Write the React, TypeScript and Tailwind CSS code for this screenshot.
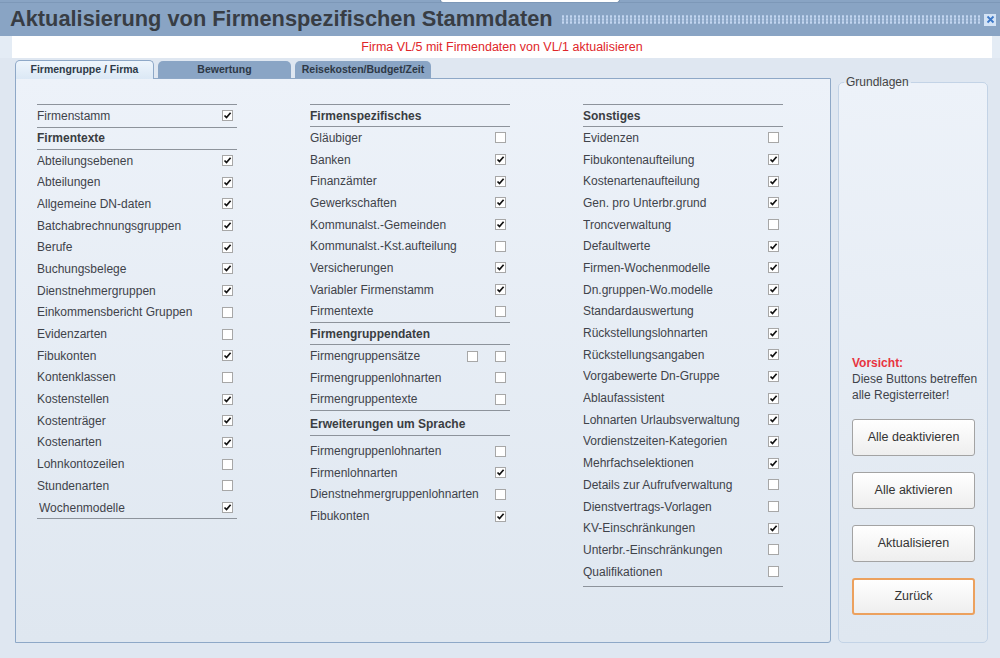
import React from 'react';

type Entry =
	| { t: 'line'; cls?: string }
	| { t: 'head'; label: string; cls?: string }
	| { t: 'item'; label: string; on: boolean; extra?: boolean; cls?: string; boxCls?: string };

const line = (cls?: string): Entry => ({ t: 'line', cls });
const head = (label: string, cls?: string): Entry => ({ t: 'head', label, cls });
const item = (label: string, on: boolean, opts: Partial<{ extra: boolean; cls: string; boxCls: string }> = {}): Entry => ({
	t: 'item',
	label,
	on,
	...opts,
});

const col1: Entry[] = [
	line(),
	item('Firmenstamm', true),
	line(),
	head('Firmentexte'),
	line(),
	item('Abteilungsebenen', true),
	item('Abteilungen', true),
	item('Allgemeine DN-daten', true),
	item('Batchabrechnungsgruppen', true),
	item('Berufe', true),
	item('Buchungsbelege', true),
	item('Dienstnehmergruppen', true),
	item('Einkommensbericht Gruppen', false),
	item('Evidenzarten', false),
	item('Fibukonten', true),
	item('Kontenklassen', false),
	item('Kostenstellen', true),
	item('Kostenträger', true),
	item('Kostenarten', true),
	item('Lohnkontozeilen', false),
	item('Stundenarten', false),
	item('Wochenmodelle', true, { cls: 'pl-[2px]' }),
	line(),
];

const col2: Entry[] = [
	line(),
	head('Firmenspezifisches'),
	line(),
	item('Gläubiger', false),
	item('Banken', true),
	item('Finanzämter', true),
	item('Gewerkschaften', true),
	item('Kommunalst.-Gemeinden', true),
	item('Kommunalst.-Kst.aufteilung', false),
	item('Versicherungen', true),
	item('Variabler Firmenstamm', true),
	item('Firmentexte', false),
	line(),
	head('Firmengruppendaten'),
	line(),
	item('Firmengruppensätze', false, { extra: true }),
	item('Firmengruppenlohnarten', false),
	item('Firmengruppentexte', false),
	line(),
	head('Erweiterungen um Sprache', 'h-[24px] pt-[1px]'),
	line('mb-[4px]'),
	item('Firmengruppenlohnarten', false),
	item('Firmenlohnarten', true),
	item('Dienstnehmergruppenlohnarten', false, { boxCls: 'mr-[2px]' }),
	item('Fibukonten', true, { boxCls: 'mr-[2px]' }),
];

const col3: Entry[] = [
	line(),
	head('Sonstiges'),
	line(),
	item('Evidenzen', false),
	item('Fibukontenaufteilung', true),
	item('Kostenartenaufteilung', true),
	item('Gen. pro Unterbr.grund', true),
	item('Troncverwaltung', false),
	item('Defaultwerte', true),
	item('Firmen-Wochenmodelle', true),
	item('Dn.gruppen-Wo.modelle', true),
	item('Standardauswertung', true),
	item('Rückstellungslohnarten', true),
	item('Rückstellungsangaben', true),
	item('Vorgabewerte Dn-Gruppe', true),
	item('Ablaufassistent', true),
	item('Lohnarten Urlaubsverwaltung', true),
	item('Vordienstzeiten-Kategorien', true),
	item('Mehrfachselektionen', true),
	item('Details zur Aufrufverwaltung', false),
	item('Dienstvertrags-Vorlagen', false),
	item('KV-Einschränkungen', true),
	item('Unterbr.-Einschränkungen', false),
	item('Qualifikationen', false),
	line('mt-[4px]'),
];

function Box({ on, className = '' }: { on: boolean; className?: string }) {
	return (
		<span className={`flex h-[11px] w-[11px] shrink-0 items-center justify-center border border-[#a7a7a7] bg-white ${className}`}>
			{on && (
				<svg width="9" height="9" viewBox="0 0 9 9">
					<path d="M1.5 4.5 L3.5 6.6 L7.6 1.8" fill="none" stroke="#111" strokeWidth="1.7" />
				</svg>
			)}
		</span>
	);
}

function Column({ entries }: { entries: Entry[] }) {
	return (
		<div className="flex w-[200px] flex-col">
			{entries.map((e, i) => {
				if (e.t === 'line') return <div key={i} className={`h-px shrink-0 bg-[#8d939b] ${e.cls ?? ''}`} />;
				if (e.t === 'head')
					return (
						<div key={i} className={`flex h-[21px] shrink-0 items-center text-[12px] font-bold text-[#3a3d42] ${e.cls ?? ''}`}>
							{e.label}
						</div>
					);
				return (
					<div key={i} className={`flex h-[21.7px] shrink-0 items-center text-[12px] text-[#3f434a] ${e.cls ?? ''}`}>
						<span className="flex-1 truncate">{e.label}</span>
						{e.extra && <Box on={false} className="mr-[17px]" />}
						<Box on={e.on} className={`mr-[4px] ${e.boxCls ?? ''}`} />
					</div>
				);
			})}
		</div>
	);
}

function Btn({ label, primary }: { label: string; primary?: boolean }) {
	return (
		<button
			className={`h-[37px] w-[123px] rounded-[3px] bg-gradient-to-b from-white to-[#eeeeee] text-[12.5px] text-[#333] ${
				primary ? 'border-2 border-[#eca15e]' : 'border border-[#a3a3a3]'
			}`}
		>
			{label}
		</button>
	);
}

export default function App() {
	return (
		<div className="flex h-[658px] w-[1000px] flex-col overflow-hidden bg-[#dfe7f1] font-['Liberation_Sans',Arial,sans-serif]">
			{/* title bar */}
			<div className="relative flex h-[36px] shrink-0 items-center bg-[#89a4c4]">
				<div className="absolute left-[440px] top-0 h-[3px] w-[180px] rounded-b-[3px] border-x border-b border-[#7590b0] bg-white" />
				<div className="absolute left-0 top-0 h-[3px] w-full border-b border-[#7d98b8]" />
				<h1 className="shrink-0 whitespace-nowrap pl-[10px] pt-[3px] text-[21.8px] font-bold text-[#383d44]">
					Aktualisierung von Firmenspezifischen Stammdaten
				</h1>
				<div className="ml-[8px] mt-[3px] h-[9px] min-w-0 flex-1 bg-[radial-gradient(circle,#c3d6f0_1px,transparent_1.4px)] bg-[length:4px_3px]" />
				<div className="ml-[4px] mr-[4px] mt-[3px] flex h-[12px] w-[12px] shrink-0 items-center justify-center bg-[#d4e3f5]">
					<svg width="9" height="9" viewBox="0 0 9 9">
						<path d="M1.5 1.5 L7.5 7.5 M7.5 1.5 L1.5 7.5" stroke="#3c78c8" strokeWidth="1.8" />
					</svg>
				</div>
			</div>

			{/* subtitle */}
			<div className="flex h-[22px] shrink-0 bg-[#e4ecf5] pl-[12px] pr-[8px]">
				<div className="flex flex-1 items-center justify-center bg-white text-[12.5px] text-[#e0262a]">
					Firma VL/5 mit Firmendaten von VL/1 aktualisieren
				</div>
			</div>

			{/* body */}
			<div className="flex flex-1 gap-[7px] pl-[15px] pr-[12px] pt-[2px] pb-[15px]">
				<div className="flex w-[816px] shrink-0 flex-col">
					<div className="flex h-[18px] shrink-0 items-end gap-[4px]">
						<div className="relative z-10 -mb-px flex h-[19px] w-[139px] items-center justify-center rounded-t-[5px] border border-b-0 border-[#8ea8c7] bg-gradient-to-b from-[#eef5fc] to-[#dbe8f5] text-[10.5px] font-bold text-[#2e3a47]">
							Firmengruppe / Firma
						</div>
						<div className="flex h-[17px] w-[133px] items-center justify-center rounded-t-[5px] bg-[#8aa5c5] text-[10.5px] font-bold text-[#2d3845]">
							Bewertung
						</div>
						<div className="flex h-[17px] w-[136px] items-center justify-center rounded-t-[5px] bg-[#8aa5c5] text-[10.5px] font-bold text-[#2d3845]">
							Reisekosten/Budget/Zeit
						</div>
					</div>
					<div className="flex flex-1 gap-[73px] rounded-br-[3px] border border-[#8ea8c7] bg-gradient-to-b from-[#edf2f9] to-[#dfe7f0] pl-[21px] pt-[25px]">
						<Column entries={col1} />
						<Column entries={col2} />
						<Column entries={col3} />
					</div>
				</div>

				<fieldset className="mt-[13px] flex w-[150px] min-w-0 flex-col rounded-[5px] border border-[#c3d3e6] bg-gradient-to-b from-[#edf2f9] to-[#dfe7f0] pl-[13px] pr-[10px] pb-[27px]">
					<legend className="-ml-[8px] px-[2px] text-[12px] text-[#444]">Grundlagen</legend>
					<div className="flex-1" />
					<div className="whitespace-nowrap text-[12px] leading-[16px] text-[#3f434a]">
						<div className="font-bold text-[#e8343f]">Vorsicht:</div>
						<div>Diese Buttons betreffen</div>
						<div>alle Registerreiter!</div>
					</div>
					<div className="mt-[16px] flex flex-col gap-[16px]">
						<Btn label="Alle deaktivieren" />
						<Btn label="Alle aktivieren" />
						<Btn label="Aktualisieren" />
						<Btn label="Zurück" primary />
					</div>
				</fieldset>
			</div>
		</div>
	);
}
